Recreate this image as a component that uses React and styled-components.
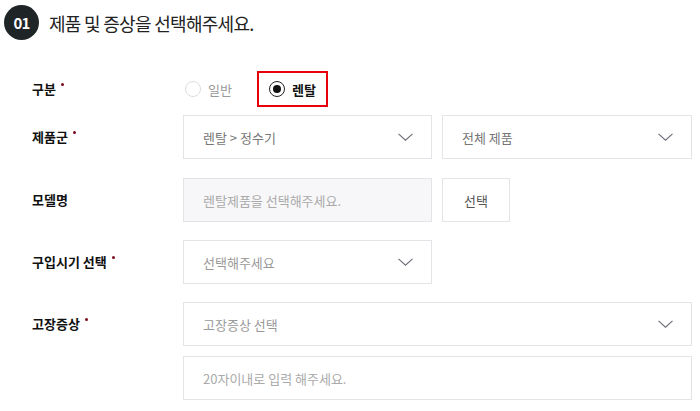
import React from "react";
import styled, { createGlobalStyle } from "styled-components";

const GlobalStyle = createGlobalStyle`
  body {
    margin: 0;
    background: #fff;
    font-family: "Noto Sans CJK KR", "Noto Sans", sans-serif;
    color: #222;
  }
`;

const Page = styled.div`
  width: 700px;
  height: 411px;
  padding: 5px 4px 0;
  box-sizing: border-box;
  overflow: hidden;
`;

const Header = styled.div`
  display: flex;
  align-items: center;
  gap: 10px;
  height: 35px;
`;

const StepBadge = styled.div`
  width: 35px;
  height: 35px;
  border-radius: 50%;
  background: #1f2527;
  color: #fff;
  font-size: 15px;
  font-weight: 700;
  display: flex;
  align-items: center;
  justify-content: center;
  letter-spacing: -0.8px;
`;

const Title = styled.h2`
  margin: 0;
  font-size: 18px;
  font-weight: 400;
  color: #222;
  letter-spacing: -0.7px;
`;

const Form = styled.div`
  display: flex;
  flex-direction: column;
  padding-left: 28px;
  margin-top: 27px;
`;

const Row = styled.div`
  display: flex;
  align-items: ${(p) => (p.top ? "flex-start" : "center")};
  margin-top: ${(p) => p.gap || 0}px;
`;

const Label = styled.div`
  width: 151px;
  flex-shrink: 0;
  font-size: 13px;
  font-weight: 700;
  color: #111;
  display: flex;
  align-items: flex-start;
  line-height: 44px;
  height: 44px;
`;

const Required = styled.span`
  width: 3px;
  height: 3px;
  border-radius: 50%;
  background: #7a0a1a;
  margin: 16px 0 0 5px;
`;

const Fields = styled.div`
  display: flex;
  flex-direction: column;
  gap: 10px;
`;

const FieldLine = styled.div`
  display: flex;
  gap: 10px;
`;

const RadioGroup = styled.div`
  display: flex;
  align-items: center;
  height: 36px;
`;

const RadioOption = styled.label`
  display: flex;
  align-items: center;
  gap: 7px;
  box-sizing: border-box;
  padding: 0 10px;
  margin-left: ${(p) => (p.first ? "-10px" : "13px")};
  font-size: 13px;
  font-weight: ${(p) => (p.checked ? 700 : 400)};
  color: ${(p) => (p.checked ? "#111" : "#999")};
  border: 2px solid ${(p) => (p.highlight ? "#e8000b" : "transparent")};
  height: 36px;
`;

const RadioDot = styled.span`
  width: 16px;
  height: 16px;
  border-radius: 50%;
  box-sizing: border-box;
  border: 1px solid ${(p) => (p.checked ? "#222" : "#ddd")};
  display: flex;
  align-items: center;
  justify-content: center;
  &::after {
    content: "";
    width: 8px;
    height: 8px;
    border-radius: 50%;
    background: ${(p) => (p.checked ? "#111" : "transparent")};
  }
`;

const Box = styled.div`
  width: ${(p) => p.w}px;
  height: 44px;
  box-sizing: border-box;
  border: 1px solid #e4e4e8;
  background: ${(p) => (p.disabled ? "#f7f7f9" : "#fff")};
  display: flex;
  align-items: center;
  justify-content: space-between;
  padding: 0 18px 0 19px;
  font-size: 13px;
  color: ${(p) => p.color || "#999"};
`;

const Button = styled.button`
  width: 68px;
  height: 44px;
  border: 1px solid #e4e4e8;
  background: #fff;
  font-family: inherit;
  font-size: 13px;
  color: #555;
  padding: 0;
`;

const Chevron = () => (
  <svg width="15" height="8" viewBox="0 0 15 8">
    <path d="M0.5 0.8 L7.5 7.2 L14.5 0.8" fill="none" stroke="#6b6b78" strokeWidth="1.1" />
  </svg>
);

const Select = ({ w, text, color }) => (
  <Box w={w} color={color}>
    <span>{text}</span>
    <Chevron />
  </Box>
);

const FieldLabel = ({ children, required }) => (
  <Label>
    {children}
    {required && <Required />}
  </Label>
);

export default function App() {
  return (
    <Page>
      <GlobalStyle />
      <Header>
        <StepBadge>01</StepBadge>
        <Title>제품 및 증상을 선택해주세요.</Title>
      </Header>
      <Form>
        <Row>
          <FieldLabel required>구분</FieldLabel>
          <RadioGroup>
            <RadioOption first>
              <RadioDot />
              일반
            </RadioOption>
            <RadioOption checked highlight>
              <RadioDot checked />
              렌탈
            </RadioOption>
          </RadioGroup>
        </Row>
        <Row gap={4}>
          <FieldLabel required>제품군</FieldLabel>
          <FieldLine>
            <Select w={249} text="렌탈 > 정수기" color="#777" />
            <Select w={250} text="전체 제품" color="#777" />
          </FieldLine>
        </Row>
        <Row gap={19}>
          <FieldLabel>모델명</FieldLabel>
          <FieldLine>
            <Box w={249} disabled color="#aaa">
              렌탈제품을 선택해주세요.
            </Box>
            <Button>선택</Button>
          </FieldLine>
        </Row>
        <Row gap={18}>
          <FieldLabel required>구입시기 선택</FieldLabel>
          <Select w={249} text="선택해주세요" color="#999" />
        </Row>
        <Row gap={18} top>
          <FieldLabel required>고장증상</FieldLabel>
          <Fields>
            <Select w={509} text="고장증상 선택" color="#999" />
            <Box w={509} color="#aaa">
              20자이내로 입력 해주세요.
            </Box>
          </Fields>
        </Row>
      </Form>
    </Page>
  );
}
